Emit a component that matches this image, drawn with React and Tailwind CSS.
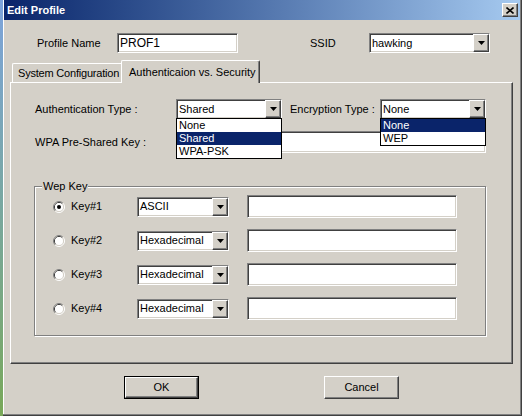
import React from "react";

const sunken =
  "bg-white border border-t-[#808080] border-l-[#808080] border-r-white border-b-white shadow-[inset_1px_1px_0_#404040,inset_-1px_-1px_0_#D4D0C8]";
const raised =
  "bg-[#D4D0C8] border border-t-white border-l-white border-r-[#404040] border-b-[#404040] shadow-[inset_-1px_-1px_0_#808080,inset_1px_1px_0_#D4D0C8]";

function Arrow() {
  return (
    <svg width="7" height="4" viewBox="0 0 7 4">
      <path d="M0 0H7L3.5 4Z" fill="#000" />
    </svg>
  );
}

function Select({ w, h = "h-[20px]", value, list }) {
  return (
    <div className={`relative ${w} ${h} ${sunken} flex items-center`}>
      <span className="flex-1 pl-[2px] leading-none whitespace-nowrap">{value}</span>
      <div className={`w-[16px] h-full ${raised} flex items-center justify-center`}>
        <Arrow />
      </div>
      {list && (
        <div className="absolute left-[-1px] top-full w-[calc(100%+2px)] z-20 bg-white border border-black">
          {list.map((it) => (
            <div
              key={it.t}
              className={`h-[13px] pl-[2px] flex items-center leading-none ${
                it.sel ? "bg-[#0A246A] text-white" : "text-black"
              }`}
            >
              {it.t}
            </div>
          ))}
        </div>
      )}
    </div>
  );
}

function Radio({ checked }) {
  return (
    <svg width="12" height="12" viewBox="0 0 12 12">
      <path d="M2.11 9.89A5.5 5.5 0 0 1 9.89 2.11" stroke="#808080" fill="none" />
      <path d="M9.89 2.11A5.5 5.5 0 0 1 2.11 9.89" stroke="#FFFFFF" fill="none" />
      <path d="M2.82 9.18A4.5 4.5 0 0 1 9.18 2.82" stroke="#404040" fill="none" />
      <path d="M9.18 2.82A4.5 4.5 0 0 1 2.82 9.18" stroke="#D4D0C8" fill="none" />
      <circle cx="6" cy="6" r="4" fill="#fff" />
      {checked && <circle cx="6" cy="6" r="2" fill="#000" />}
    </svg>
  );
}

function KeyRow({ n, fmt, checked }) {
  return (
    <div className="flex items-center h-[23px]">
      <div className="w-[12px] h-[12px] flex">
        <Radio checked={checked} />
      </div>
      <div className="ml-[6px] w-[66px]">Key#{n}</div>
      <Select w="w-[92px]" value={fmt} />
      <div className={`ml-[18px] w-[210px] h-[23px] ${sunken}`} />
    </div>
  );
}

export default function App() {
  return (
    <div className="w-[522px] h-[416px] flex overflow-hidden font-['Liberation_Sans',Arial,sans-serif] text-[11px] text-black">
      <div className="w-[3px] h-full bg-linear-to-b from-[#7da3dc] to-[#79a858]" />
      <div className="w-[519px] h-full bg-[#D4D0C8] border-r border-b border-[#404040] shadow-[inset_-1px_-1px_0_#808080,inset_1px_0_0_#ffffff] flex flex-col">
        <div className="ml-[1px] mr-[1px] h-[20px] bg-linear-to-r from-[#0A246A] to-[#A6CAF0] flex items-center">
          <span className="ml-[3px] text-white font-bold text-[11px] leading-none">Edit Profile</span>
          <div className={`ml-auto mr-[2px] w-[16px] h-[14px] ${raised} flex items-center justify-center`}>
            <svg width="8" height="7" viewBox="0 0 8 7">
              <path d="M0.5 0.5L7.5 6.5M7.5 0.5L0.5 6.5" stroke="#000" strokeWidth="1.6" />
            </svg>
          </div>
        </div>

        {/* Profile row */}
        <div className="mt-[13px] pl-[34px] flex items-center h-[20px]">
          <div className="w-[80px]">Profile Name</div>
          <div className={`w-[121px] h-[20px] ${sunken} flex items-center pl-[2px] text-[12px]`}>PROF1</div>
          <div className="ml-[72px] w-[59px]">SSID</div>
          <Select w="w-[121px]" value="hawking" />
        </div>

        {/* Tabs */}
        <div className="mt-[7px] ml-[7px] w-[503px]">
          <div className="flex items-end h-[22px] pl-[2px]">
            <div className="w-[109px] h-[19px] bg-[#D4D0C8] border-t border-l border-white rounded-tl-[2px] flex items-center pl-[5px] whitespace-nowrap tracking-[-0.2px] overflow-hidden">
              System Configuration
            </div>
            <div className="relative z-10 -mb-[1px] w-[139px] h-[23px] bg-[#D4D0C8] border-t border-l border-white border-r border-r-[#404040] rounded-t-[2px] shadow-[inset_-1px_0_0_#808080] flex items-start pt-[3px] pl-[7px] whitespace-nowrap">
              Authenticaion vs. Security
            </div>
          </div>
          <div className="h-[282px] border border-t-white border-l-white border-r-[#404040] border-b-[#404040] shadow-[inset_-1px_-1px_0_#808080] pt-[16px] pl-[24px]">
            <div className="flex items-center h-[20px]">
              <div className="w-[141px]">Authentication Type :</div>
              <Select
                w="w-[106px]"
                value="Shared"
                list={[{ t: "None" }, { t: "Shared", sel: true }, { t: "WPA-PSK" }]}
              />
              <div className="ml-[8px] w-[90px]">Encryption Type :</div>
              <Select w="w-[106px]" value="None" list={[{ t: "None", sel: true }, { t: "WEP" }]} />
            </div>
            <div className="mt-[12px] flex items-center h-[22px]">
              <div className="w-[141px]">WPA Pre-Shared Key :</div>
              <div className={`w-[310px] h-[22px] ${sunken}`} />
            </div>

            <div className="relative mt-[33px] -ml-[1px] w-[452px] h-[150px] border border-[#808080] shadow-[inset_1px_1px_0_#ffffff,1px_1px_0_#ffffff] pt-[8px] pl-[18px] flex flex-col gap-[11px]">
              <div className="absolute -top-[7px] left-[7px] px-[1px] bg-[#D4D0C8] leading-[13px]">Wep Key</div>
              <KeyRow n={1} fmt="ASCII" checked />
              <KeyRow n={2} fmt="Hexadecimal" />
              <KeyRow n={3} fmt="Hexadecimal" />
              <KeyRow n={4} fmt="Hexadecimal" />
            </div>
          </div>
        </div>

        {/* Buttons */}
        <div className="mt-[12px] ml-[121px] flex">
          <div className="w-[75px] h-[23px] border border-black">
            <div className={`w-full h-full ${raised} flex items-center justify-center`}>OK</div>
          </div>
          <div className={`ml-[125px] w-[75px] h-[23px] ${raised} flex items-center justify-center`}>Cancel</div>
        </div>
      </div>
    </div>
  );
}
